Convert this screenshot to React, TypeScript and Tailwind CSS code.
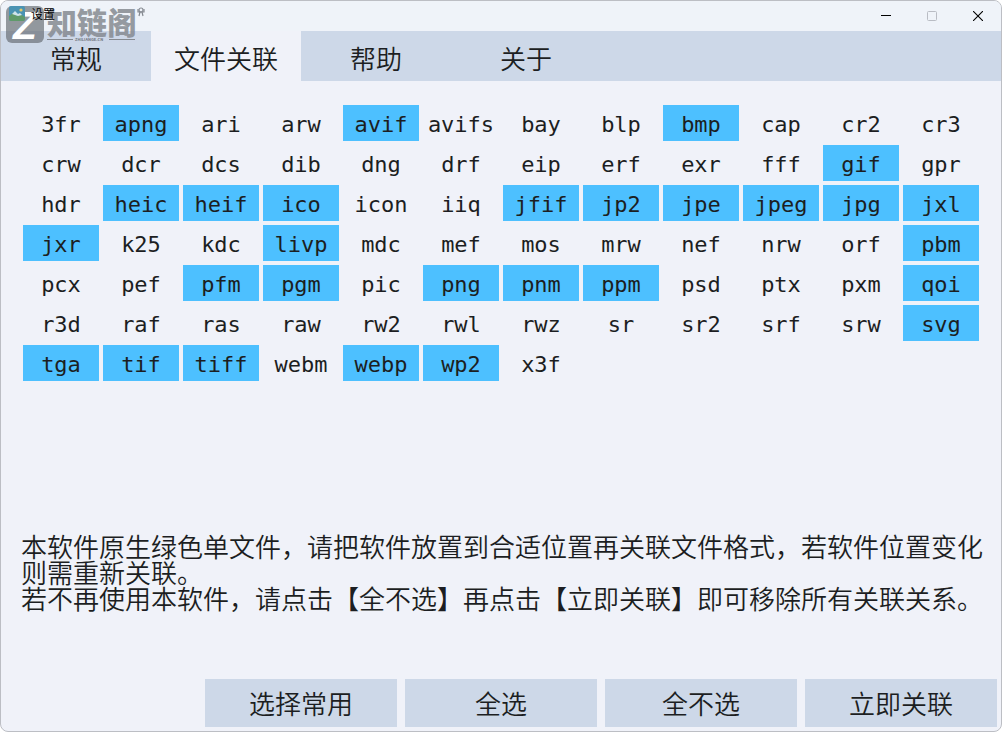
import React, { useState } from 'react';

const TABS = ['常规', '文件关联', '帮助', '关于'];

const FORMATS = (
  '3fr apng ari arw avif avifs bay blp bmp cap cr2 cr3 ' +
  'crw dcr dcs dib dng drf eip erf exr fff gif gpr ' +
  'hdr heic heif ico icon iiq jfif jp2 jpe jpeg jpg jxl ' +
  'jxr k25 kdc livp mdc mef mos mrw nef nrw orf pbm ' +
  'pcx pef pfm pgm pic png pnm ppm psd ptx pxm qoi ' +
  'r3d raf ras raw rw2 rwl rwz sr sr2 srf srw svg ' +
  'tga tif tiff webm webp wp2 x3f'
).split(' ');

const COMMON = (
  'apng avif bmp gif heic heif ico jfif jp2 jpe jpeg jpg jxl jxr livp pbm ' +
  'pfm pgm png pnm ppm qoi svg tga tif tiff webp wp2'
).split(' ');

function AppIcon() {
  return (
    <svg width="16" height="16" viewBox="0 0 16 16" aria-hidden="true">
      <rect width="16" height="15" rx="2" fill="#4a93b3" />
      <path d="M0 10l4-3 4 3 3-2 5 3v2a2 2 0 0 1-2 2H2a2 2 0 0 1-2-2z" fill="#5f9a6b" />
      <path d="M3 8l3-3 3 3 2-1 2 2-4 1-3-1z" fill="#cfe3ea" />
      <circle cx="12" cy="4" r="1.6" fill="#e2c96a" />
    </svg>
  );
}

function Watermark() {
  return (
    <svg
      className="pointer-events-none absolute left-1 top-1 z-10 overflow-visible font-['Noto_Sans_CJK_SC',sans-serif]"
      width="144"
      height="40"
      viewBox="0 0 144 40"
      aria-hidden="true"
    >
      <rect x="1" y="1" width="38" height="37" rx="6" fill="#6b7078" fillOpacity="0.7" />
      <text x="8" y="34" fontSize="39" fontWeight="700" fontStyle="italic" fill="#fff" className="font-['Liberation_Sans',sans-serif]">Z</text>
      <text x="42" y="29" fontSize="30" fontWeight="900" fill="#858a91" opacity="0.85">知链阁</text>
      <path d="M42 34.500h26M104 34.500h26" stroke="#858a91" />
      <text x="70" y="36" fontSize="4" fontWeight="700" fill="#70757c">ZHILIANGE.CN</text>
      <g fill="none" stroke="#858a91" strokeWidth="1.2">
        <circle cx="136" cy="5" r="2" />
        <path d="M133 4v3h6V4M135 7l-1 4M137 7l1 4" />
      </g>
    </svg>
  );
}

function TitleBar() {
  return (
    <header className="relative flex h-[30px] items-center bg-[#eff3f9] text-xs">
      <Watermark />
      <div className="relative z-20 flex flex-1 items-center gap-1.5 pb-1 pl-2">
        <AppIcon />
        <h1 className="font-normal text-black">设置</h1>
      </div>
      <div className="flex h-full">
        <button aria-label="最小化" className="flex w-[46px] items-center justify-center">
          <svg width="10" height="10" viewBox="0 0 10 10"><path d="M0 4.500h10" stroke="#000" /></svg>
        </button>
        <button aria-label="最大化" disabled className="flex w-[46px] items-center justify-center">
          <svg width="10" height="10" viewBox="0 0 10 10">
            <rect x="0.5" y="0.5" width="9" height="9" rx="1" fill="none" stroke="#b9bcc4" />
          </svg>
        </button>
        <button aria-label="关闭" className="flex w-[46px] items-center justify-center">
          <svg width="10" height="10" viewBox="0 0 10 10">
            <path d="M0 0l10 10M10 0L0 10" stroke="#000" strokeWidth="1.1" />
          </svg>
        </button>
      </div>
    </header>
  );
}

export default function App() {
  const [tab, setTab] = useState(1);
  const [selected, setSelected] = useState<string[]>(COMMON);

  function toggle(name: string) {
    setSelected(selected.includes(name) ? selected.filter((n) => n !== name) : [...selected, name]);
  }

  const actions = [
    { label: '选择常用', run: () => setSelected(COMMON) },
    { label: '全选', run: () => setSelected(FORMATS) },
    { label: '全不选', run: () => setSelected([]) },
    { label: '立即关联', run: () => {} },
  ];

  return (
    <div className="flex min-h-screen flex-col overflow-hidden rounded-lg border border-[#bcbec4] bg-[#f0f2f9] font-['Noto_Sans_CJK_SC',sans-serif] text-[26px] font-[350] text-[#1c1e22]">
      <TitleBar />

      <nav role="tablist" className="flex h-[50px] bg-[#cdd8e8]">
        {TABS.map((t, i) => (
          <button
            key={t}
            role="tab"
            aria-selected={i === tab}
            onClick={() => setTab(i)}
            className={`w-[150px] pt-1 leading-none ${i === tab ? 'bg-[#f0f2f9]' : ''}`}
          >
            {t}
          </button>
        ))}
      </nav>

      <main className="flex flex-1 flex-col">
        <div className="grid grid-cols-12 gap-1 px-[22px] pt-6 font-['DejaVu_Sans_Mono',monospace] text-[22px]">
          {FORMATS.map((name) => (
            <button
              key={name}
              aria-pressed={selected.includes(name)}
              onClick={() => toggle(name)}
              className={`h-9 pt-1 leading-8 ${selected.includes(name) ? 'bg-[#4dc0ff]' : ''}`}
            >
              {name}
            </button>
          ))}
        </div>

        <div className="mt-auto pb-[68px] pl-5 pr-4 leading-[26px]">
          <p>本软件原生绿色单文件，请把软件放置到合适位置再关联文件格式，若软件位置变化则需重新关联。</p>
          <p>若不再使用本软件，请点击【全不选】再点击【立即关联】即可移除所有关联关系。</p>
        </div>
      </main>

      <footer className="flex justify-end gap-2 px-1 pb-1">
        {actions.map((a) => (
          <button key={a.label} onClick={a.run} className="h-12 w-48 bg-[#cdd8e8] leading-none">
            {a.label}
          </button>
        ))}
      </footer>
    </div>
  );
}
